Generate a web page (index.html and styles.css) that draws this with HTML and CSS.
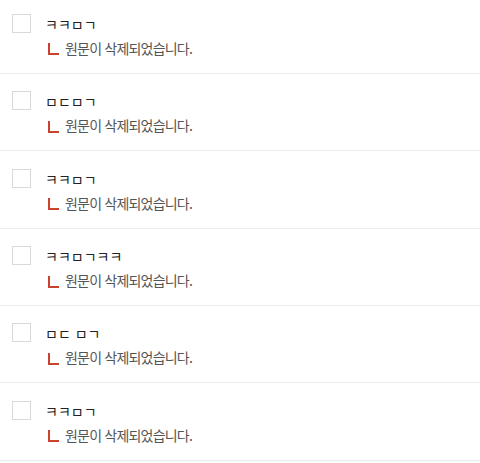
FILE: index.html
```html
<!DOCTYPE html>
<html lang="ko">
<head>
<meta charset="utf-8">
<link rel="stylesheet" href="styles.css">
</head>
<body>
<ul class="list">
  <li class="row">
    <span class="check"></span>
    <div class="body">
      <div class="title">ㅋㅋㅁㄱ</div>
      <div class="reply"><span class="mark"></span><span class="msg">원문이 삭제되었습니다.</span></div>
    </div>
  </li>
  <li class="row">
    <span class="check"></span>
    <div class="body">
      <div class="title">ㅁㄷㅁㄱ</div>
      <div class="reply"><span class="mark"></span><span class="msg">원문이 삭제되었습니다.</span></div>
    </div>
  </li>
  <li class="row">
    <span class="check"></span>
    <div class="body">
      <div class="title">ㅋㅋㅁㄱ</div>
      <div class="reply"><span class="mark"></span><span class="msg">원문이 삭제되었습니다.</span></div>
    </div>
  </li>
  <li class="row">
    <span class="check"></span>
    <div class="body">
      <div class="title">ㅋㅋㅁㄱㅋㅋ</div>
      <div class="reply"><span class="mark"></span><span class="msg">원문이 삭제되었습니다.</span></div>
    </div>
  </li>
  <li class="row">
    <span class="check"></span>
    <div class="body">
      <div class="title">ㅁㄷ ㅁㄱ</div>
      <div class="reply"><span class="mark"></span><span class="msg">원문이 삭제되었습니다.</span></div>
    </div>
  </li>
  <li class="row">
    <span class="check"></span>
    <div class="body">
      <div class="title">ㅋㅋㅁㄱ</div>
      <div class="reply"><span class="mark"></span><span class="msg">원문이 삭제되었습니다.</span></div>
    </div>
  </li>
</ul>
</body>
</html>
```
FILE: styles.css
```css
html, body {
  margin: 0;
  padding: 0;
  background: #fff;
}
body {
  font-family: "Noto Sans CJK KR", "Noto Sans", sans-serif;
  overflow: hidden;
}
.list {
  list-style: none;
  margin: -3.6px 0 0 0;
  padding: 0;
}
.row {
  box-sizing: border-box;
  height: 77.4px;
  border-bottom: 1px solid #ebebeb;
  display: flex;
  align-items: flex-start;
  padding: 17.5px 0 0 12px;
}
.check {
  box-sizing: border-box;
  width: 19px;
  height: 19px;
  border: 1px solid #d9d9d9;
  background: #fff;
  flex: none;
}
.body {
  margin-left: 14px;
  display: flex;
  flex-direction: column;
}
.title {
  font-size: 14px;
  line-height: 20px;
  font-weight: 400;
  color: #222;
  margin-top: 0;
}
.reply {
  display: flex;
  align-items: center;
  margin-top: 4px;
}
.mark {
  box-sizing: border-box;
  width: 11px;
  height: 12px;
  border-left: 2px solid #c9432f;
  border-bottom: 2px solid #c9432f;
  margin-left: 3px;
  margin-right: 6px;
  margin-top: 3px;
}
.msg {
  font-size: 14px;
  line-height: 20px;
  color: #555;
  letter-spacing: -0.8px;
}
```
